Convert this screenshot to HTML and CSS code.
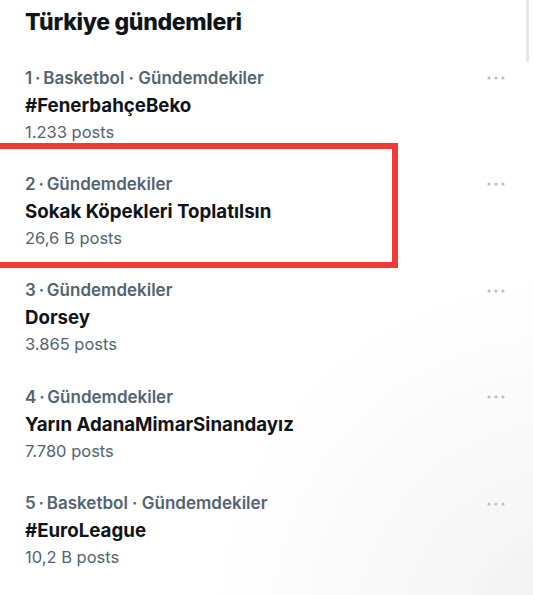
FILE: index.html
```html
<!DOCTYPE html>
<html lang="tr">
<head>
<meta charset="utf-8">
<link rel="stylesheet" href="styles.css">
</head>
<body>
<div class="page">
  <h1 class="heading">Türkiye gündemleri</h1>
  <div class="list">
    <div class="trend">
      <div class="info">
        <div class="meta">1&#8201;·&#8201;Basketbol · Gündemdekiler</div>
        <div class="name">#FenerbahçeBeko</div>
        <div class="count">1.233 posts</div>
      </div>
      <svg class="more" width="18" height="4" viewBox="0 0 18 4"><circle cx="2" cy="2" r="1.6"/><circle cx="9" cy="2" r="1.6"/><circle cx="16" cy="2" r="1.6"/></svg>
    </div>
    <div class="trend">
      <div class="info">
        <div class="meta">2&#8201;·&#8201;Gündemdekiler</div>
        <div class="name">Sokak Köpekleri Toplatılsın</div>
        <div class="count">26,6 B posts</div>
      </div>
      <svg class="more" width="18" height="4" viewBox="0 0 18 4"><circle cx="2" cy="2" r="1.6"/><circle cx="9" cy="2" r="1.6"/><circle cx="16" cy="2" r="1.6"/></svg>
    </div>
    <div class="trend">
      <div class="info">
        <div class="meta">3&#8201;·&#8201;Gündemdekiler</div>
        <div class="name">Dorsey</div>
        <div class="count">3.865 posts</div>
      </div>
      <svg class="more" width="18" height="4" viewBox="0 0 18 4"><circle cx="2" cy="2" r="1.6"/><circle cx="9" cy="2" r="1.6"/><circle cx="16" cy="2" r="1.6"/></svg>
    </div>
    <div class="trend">
      <div class="info">
        <div class="meta">4&#8201;·&#8201;Gündemdekiler</div>
        <div class="name">Yarın AdanaMimarSinandayız</div>
        <div class="count">7.780 posts</div>
      </div>
      <svg class="more" width="18" height="4" viewBox="0 0 18 4"><circle cx="2" cy="2" r="1.6"/><circle cx="9" cy="2" r="1.6"/><circle cx="16" cy="2" r="1.6"/></svg>
    </div>
    <div class="trend">
      <div class="info">
        <div class="meta">5&#8201;·&#8201;Basketbol · Gündemdekiler</div>
        <div class="name">#EuroLeague</div>
        <div class="count">10,2 B posts</div>
      </div>
      <svg class="more" width="18" height="4" viewBox="0 0 18 4"><circle cx="2" cy="2" r="1.6"/><circle cx="9" cy="2" r="1.6"/><circle cx="16" cy="2" r="1.6"/></svg>
    </div>
  </div>
  <div class="highlight"></div>
  <div class="scrollbar"></div>
</div>
</body>
</html>
```

FILE: styles.css
```css
html, body {
  margin: 0;
  padding: 0;
  background: #ffffff;
}
body {
  font-family: Inter, "Noto Sans", sans-serif;
  color: #0f1419;
  width: 533px;
  height: 595px;
  overflow: hidden;
}
.page {
  position: relative;
  height: 595px;
  padding: 0 28px 0 25px;
  box-sizing: border-box;
  background: radial-gradient(circle at 105% 105%, #f1f1f1 0%, #f9f9f9 22%, #ffffff 42%);
}
.heading {
  margin: 0;
  font-size: 23px;
  font-weight: 800;
  line-height: 44px;
  letter-spacing: -0.3px;
}
.list {
  display: flex;
  flex-direction: column;
  gap: 25.4px;
  padding-top: 20.5px;
}
.trend {
  display: flex;
  justify-content: space-between;
  align-items: flex-start;
}
.info {
  display: flex;
  flex-direction: column;
}
.meta, .name, .count {
  line-height: 27px;
  white-space: nowrap;
}
.meta {
  font-size: 17px;
  font-weight: 600;
  color: #536471;
}
.name {
  font-size: 18.7px;
  font-weight: 700;
  color: #0f1419;
}
.count {
  font-size: 16.5px;
  font-weight: 400;
  color: #536471;
}
.more {
  fill: #b3c0c9;
  margin-top: 11.5px;
}
.highlight {
  position: absolute;
  left: -6px;
  top: 143px;
  width: 392px;
  height: 113px;
  border: 6px solid #f03a34;
}
.scrollbar {
  position: absolute;
  right: 4px;
  top: 0;
  width: 3px;
  height: 62px;
  border-radius: 2px;
  background: #e6e6e6;
}
```
